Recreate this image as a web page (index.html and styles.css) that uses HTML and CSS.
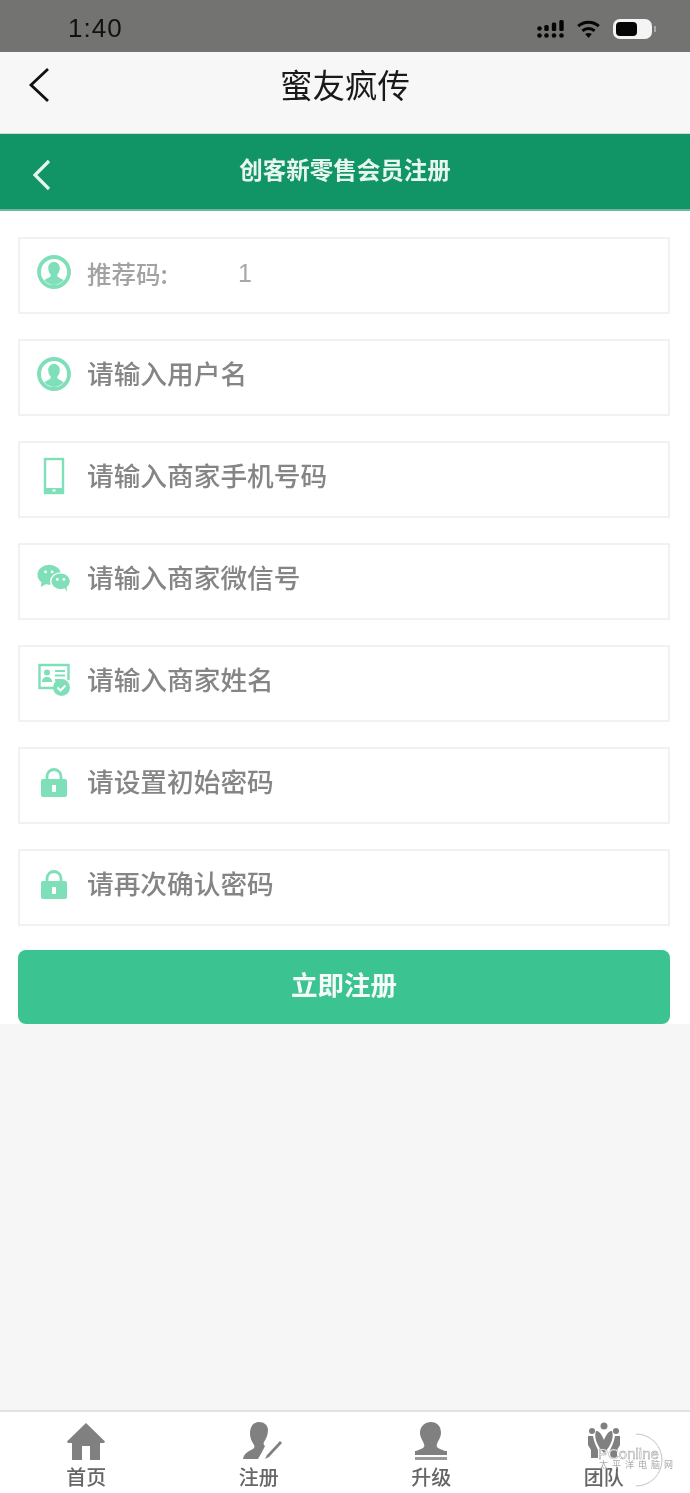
FILE: index.html
```html
<!DOCTYPE html>
<html lang="zh-CN">
<head>
<meta charset="utf-8">
<title>蜜友疯传</title>
<link rel="stylesheet" href="styles.css">
</head>
<body>
<svg class="defs" width="0" height="0" aria-hidden="true">
  <defs>
    <symbol id="user" viewBox="0 0 34 34">
      <circle cx="17" cy="17" r="15" fill="none" stroke="#7fdfb8" stroke-width="3.8"/>
      <path fill="#7fdfb8" d="M17 7c3.600 0 5.800 2.700 5.800 6.200 0 2.600-1 4.800-2.400 6.100v1.800c0 1 3.300 2 6.300 4.200A14 14 0 0 1 17 30a14 14 0 0 1-9.700-4.700c3-2.200 6.300-3.200 6.300-4.200v-1.800c-1.400-1.300-2.400-3.500-2.400-6.100C11.200 9.700 13.400 7 17 7z"/>
    </symbol>
    <symbol id="lock" viewBox="0 0 28 30">
      <path fill="none" stroke="#7fdfb8" stroke-width="2.800" d="M7 13V9.500a7 7 0 0 1 14 0V13"/>
      <rect x="1" y="12" width="26" height="18" rx="2" fill="#7fdfb8"/>
      <rect x="12" y="18" width="4" height="7" fill="#fff"/>
    </symbol>
  </defs>
</svg>

<div class="status">
  <span class="time">1:40</span>
  <div class="status-icons">
    <svg width="27" height="18" viewBox="0 0 27 18"><g fill="#050505"><circle cx="2.500" cy="15.500" r="2.300"/><circle cx="9.500" cy="15.500" r="2.300"/><circle cx="17" cy="15.500" r="2.300"/><circle cx="24.500" cy="15.500" r="2.300"/><circle cx="2.500" cy="8.500" r="2.300"/><rect x="7.300" y="5" width="4.400" height="6" rx="1.500"/><rect x="14.800" y="2.500" width="4.400" height="8.500" rx="1.500"/><rect x="22.300" y="0" width="4.400" height="11" rx="1.500"/></g></svg>
    <svg width="23" height="18" viewBox="0 0 23 18"><g fill="none" stroke="#050505" stroke-width="3"><path d="M1.200 6.200c5.800-5.200 14.800-5.200 20.600 0"/><path d="M5.400 10.800c3.500-3.100 8.700-3.100 12.200 0"/></g><path fill="#050505" d="M8.200 14c2-1.400 4.600-1.400 6.600 0l-3.300 4z"/></svg>
    <div class="battery"><div class="battery-fill"></div></div>
  </div>
</div>

<header class="nav">
  <svg class="nav-back" width="24" height="36" viewBox="0 0 24 36"><path d="M21 2 4 18l17 16" fill="none" stroke="#111" stroke-width="2.800"/></svg>
  <h1 class="nav-title">蜜友疯传</h1>
</header>

<div class="bar">
  <svg class="bar-back" width="20" height="32" viewBox="0 0 20 32"><path d="M17 2 3 16l14 14" fill="none" stroke="#e6f5ee" stroke-width="3.200"/></svg>
  <h2 class="bar-title">创客新零售会员注册</h2>
</div>

<main class="form">
  <div class="row">
    <span class="ico"><svg width="34" height="34"><use href="#user"/></svg></span>
    <span class="label">推荐码:</span><span class="value">1</span>
  </div>
  <div class="row">
    <span class="ico"><svg width="34" height="34"><use href="#user"/></svg></span>
    <span class="ph">请输入用户名</span>
  </div>
  <div class="row">
    <span class="ico"><svg width="22" height="40" viewBox="0 0 22 38"><rect x="2" y="2" width="18" height="34" fill="none" stroke="#7fdfb8" stroke-width="2.400"/><rect x="2" y="31" width="18" height="5" fill="#7fdfb8"/><rect x="9.500" y="32.500" width="3" height="2" fill="#fff"/></svg></span>
    <span class="ph">请输入商家手机号码</span>
  </div>
  <div class="row">
    <span class="ico"><svg width="36" height="31" viewBox="0 0 36 30"><ellipse cx="13" cy="11" rx="12.500" ry="10.500" fill="#7fdfb8"/><path fill="#7fdfb8" d="m5 17-1 7 7-4z"/><ellipse cx="25" cy="18" rx="10.500" ry="9" fill="#7fdfb8" stroke="#fff" stroke-width="1.500"/><path fill="#7fdfb8" d="m29 25 3 4-1-6z"/><circle cx="9" cy="8" r="1.500" fill="#fff"/><circle cx="16" cy="8" r="1.500" fill="#fff"/><circle cx="21.500" cy="16" r="1.500" fill="#fff"/><circle cx="28.500" cy="16" r="1.500" fill="#fff"/></svg></span>
    <span class="ph">请输入商家微信号</span>
  </div>
  <div class="row">
    <span class="ico"><svg width="34" height="34" viewBox="0 0 34 34"><path fill="none" stroke="#7fdfb8" stroke-width="2.400" d="M19 25H2.500V2h29v15"/><circle cx="10" cy="9.500" r="3" fill="#7fdfb8"/><path fill="#7fdfb8" d="M5 19c0-3.500 2-5 5-5s5 1.500 5 5z"/><path stroke="#7fdfb8" stroke-width="2" d="M18 8h10M18 12.500h10M18 17h6"/><circle cx="24.500" cy="24.500" r="8.500" fill="#7fdfb8"/><path d="m20.500 24.500 3 3 5-5" fill="none" stroke="#fff" stroke-width="2"/></svg></span>
    <span class="ph">请输入商家姓名</span>
  </div>
  <div class="row">
    <span class="ico"><svg width="28" height="30"><use href="#lock"/></svg></span>
    <span class="ph">请设置初始密码</span>
  </div>
  <div class="row">
    <span class="ico"><svg width="28" height="30"><use href="#lock"/></svg></span>
    <span class="ph">请再次确认密码</span>
  </div>
  <button class="submit" type="button">立即注册</button>
</main>

<div class="spacer"></div>

<nav class="tabs">
  <div class="tab">
    <svg width="40" height="38" viewBox="0 0 40 38"><path fill="#808080" d="M20 1 39 19.500l-1 1.500h-4v17H24V24h-8v14H6V21H2l-1-1.500z"/></svg>
    <span class="tab-label">首页</span>
  </div>
  <div class="tab">
    <svg class="tab-reg" width="40" height="38" viewBox="0 0 40 38"><path fill="#808080" d="M16 0c5 0 9 3 9 8 0 5-2 9-4 12-1 2 0 3 1 4l-3 6-4 7H0c1-5 4-7 8-9 3-1 4-3 3-5-2-3-4-7-4-11C7 4 11 0 16 0z"/><path fill="#808080" d="m22 37 2-4 13-14 2 2-13 14z"/></svg>
    <span class="tab-label">注册</span>
  </div>
  <div class="tab">
    <svg width="36" height="38" viewBox="0 0 36 38"><path fill="#808080" d="M18 0c6 0 10 4 10 11 0 4-3 8-4 11-1 2 0 4 3 5l5 2H3l5-2c3-1 4-3 3-5-1-3-4-7-4-11C7 4 12 0 18 0z"/><rect x="2" y="29" width="32" height="4" fill="#808080"/><rect x="2" y="35" width="32" height="3" fill="#9a9a9a"/></svg>
    <span class="tab-label">升级</span>
  </div>
  <div class="tab">
    <svg width="36" height="38" viewBox="0 0 36 38"><g fill="#808080"><circle cx="18" cy="4" r="3.500"/><circle cx="6" cy="9" r="3"/><circle cx="30" cy="9" r="3"/><path d="M10 9c3 0 5 2 8 9 3-7 5-9 8-9 2 5 0 14-8 22-8-8-10-17-8-22z"/><path d="M2 14h5c1 6 3 10 5 14v8H5v-8l-3-5zM34 14h-5c-1 6-3 10-5 14v8h7v-8l3-5z"/></g></svg>
    <span class="tab-label">团队</span>
  </div>
  <div class="mark">
    <svg class="mark-ring" width="56" height="56" viewBox="0 0 56 56"><path d="M24 2a26 26 0 0 1 26 26 26 26 0 0 1-26 26" fill="none" stroke="#c4c4c4" stroke-width="1"/></svg>
    <span class="mark-name">PConline</span>
    <span class="mark-sub">太平洋电脑网</span>
  </div>
</nav>
</body>
</html>
```
FILE: styles.css
```css
* { box-sizing: border-box; }
html, body { margin: 0; padding: 0; }
body {
  width: 690px;
  height: 1493px;
  display: flex;
  flex-direction: column;
  overflow: hidden;
  background: #f6f6f6;
  font-family: "Noto Sans CJK SC", "Noto Sans", sans-serif;
  filter: blur(0.4px);
}
.defs { position: absolute; }

.status {
  flex: none;
  height: 52px;
  background: #737471;
  display: flex;
  align-items: center;
  justify-content: space-between;
  padding: 5px 38px 0 68px;
}
.time {
  font-family: "Liberation Sans", sans-serif;
  font-size: 26px;
  letter-spacing: 1px;
  color: #111;
}
.status-icons { display: flex; align-items: center; gap: 13px; }
.battery {
  width: 39px;
  height: 20px;
  border-radius: 7px;
  background: #f4f4f4;
  padding: 3px 15px 3px 3px;
  position: relative;
}
.battery::after {
  content: "";
  position: absolute;
  right: -4px;
  top: 7px;
  width: 2px;
  height: 6px;
  background: #a9a9a7;
}
.battery-fill { height: 100%; background: #050505; border-radius: 4px; }

.nav {
  flex: none;
  height: 82px;
  background: #f7f7f7;
  border-bottom: 1px solid #d8d8d8;
  display: flex;
  justify-content: center;
  padding-top: 7px;
  position: relative;
}
.nav-back { position: absolute; left: 27px; top: 15px; }
.nav-title {
  margin: 0;
  font-size: 32.500px;
  line-height: 50px;
  font-weight: 400;
  color: #1a1a1a;
}

.bar {
  flex: none;
  height: 77px;
  background: #129566;
  border-bottom: 2px solid #6fb79b;
  display: flex;
  justify-content: center;
  padding-top: 17px;
  position: relative;
}
.bar-back { position: absolute; left: 32px; top: 25px; }
.bar-title {
  margin: 0;
  font-size: 23.500px;
  line-height: 36px;
  font-weight: 700;
  color: #e8f6f0;
}

.form {
  flex: none;
  height: 813px;
  background: #fff;
  padding: 26px 20px 0 18px;
  display: flex;
  flex-direction: column;
  gap: 25px;
}
.row {
  flex: none;
  height: 77px;
  border: 2px solid #f1f1f1;
  display: flex;
  align-items: flex-start;
  padding-left: 17px;
  color: #888;
}
.ico {
  flex: none;
  width: 34px;
  height: 40px;
  margin-top: 13px;
  margin-right: 16px;
  display: flex;
  justify-content: center;
  align-items: center;
}
.ph {
  font-size: 26.700px;
  line-height: 40px;
  margin-top: 12px;
  font-weight: 500;
  color: #858585;
}
.label {
  font-size: 24.500px;
  line-height: 40px;
  margin-top: 15px;
  font-weight: 500;
  color: #a2a2a2;
  width: 151px;
}
.value {
  font-family: "Liberation Sans", sans-serif;
  font-size: 25px;
  line-height: 40px;
  margin-top: 14px;
  color: #a8a8a8;
}
.submit {
  flex: none;
  height: 74px;
  margin-top: -1px;
  border: 0;
  border-radius: 8px;
  background: #3bc391;
  color: #f4fbf8;
  font-family: inherit;
  font-size: 26.500px;
  font-weight: 700;
  padding: 0 0 8px;
}

.spacer { flex: 1; background: #f6f6f6; }

.tabs {
  flex: none;
  height: 83px;
  background: #fff;
  border-top: 2px solid #e2e3de;
  display: grid;
  grid-template-columns: repeat(4, 1fr);
  position: relative;
}
.tab {
  display: flex;
  flex-direction: column;
  align-items: center;
  padding-top: 10px;
}
.tab svg { display: block; flex: none; }
.tab .tab-reg { margin-left: 8px; }
.tab-label {
  font-size: 20px;
  line-height: 26px;
  margin-top: 4px;
  font-weight: 500;
  color: #666;
}
.mark {
  position: absolute;
  left: 598px;
  top: 35px;
  width: 78px;
  height: 22px;
}
.mark-ring { position: absolute; left: 14px; top: -15px; }
.mark-name {
  position: absolute;
  left: 0;
  top: 0;
  font-family: "Liberation Sans", sans-serif;
  font-size: 15px;
  line-height: 13px;
  color: #fff;
  -webkit-text-stroke: 0.400px #8a8a8a;
}
.mark-sub {
  position: absolute;
  left: 1px;
  top: 14px;
  font-size: 9px;
  line-height: 8px;
  letter-spacing: 4px;
  white-space: nowrap;
  color: #aaa;
}
```
